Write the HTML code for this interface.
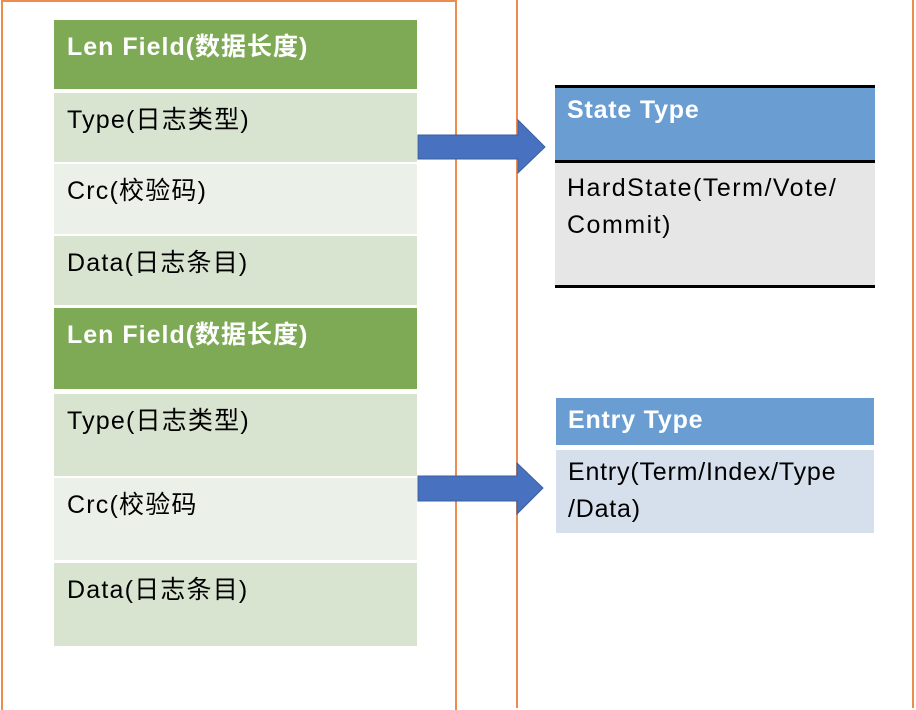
<!DOCTYPE html><html><head><meta charset="utf-8"><style>
body{margin:0;width:916px;height:704px;background:#fff;position:relative;overflow:hidden;font-family:"Liberation Sans","Noto Sans CJK SC",sans-serif}
.a{position:absolute}
.t{font-size:25px;letter-spacing:1.5px}
.c{position:absolute;left:54px;width:363px;box-sizing:border-box;padding:7px 0 0 13px;font-size:25px;letter-spacing:1.2px;color:#000}
.g{background:#7eaa55;color:#fff;font-weight:bold;letter-spacing:1px}
.l{background:#d8e3d0}.m{background:#ebf0e8}
</style></head><body>
<div class="a" style="left:1px;top:0;width:456px;height:710px;border:2px solid #ec8d4f;border-bottom:none;box-sizing:border-box"></div>
<div class="a" style="left:516px;top:-2px;width:398px;height:710px;border:2px solid #ec8d4f;border-top:none;border-bottom:none;box-sizing:border-box"></div>
<div class="c g" style="top:20px;height:69px">Len Field(数据长度)</div>
<div class="c l" style="top:93px;height:69px">Type(日志类型)</div>
<div class="c m" style="top:164px;height:70px">Crc(校验码)</div>
<div class="c l" style="top:236px;height:69px">Data(日志条目)</div>
<div class="c g" style="top:308px;height:81px">Len Field(数据长度)</div>
<div class="c l" style="top:394px;height:82px">Type(日志类型)</div>
<div class="c m" style="top:478px;height:82px">Crc(校验码</div>
<div class="c l" style="top:563px;height:83px">Data(日志条目)</div>
<svg class="a" style="left:0;top:0" width="916" height="704">
<polygon points="418,135 518,135 518,120 545,147 518,173 518,159 418,159" fill="#4872bf" stroke="#3a5f9e" stroke-width="1"/>
<polygon points="418,476 517,476 517,463 543,488 517,514 517,501 418,501" fill="#4872bf" stroke="#3a5f9e" stroke-width="1"/>
</svg>
<div class="a" style="left:555px;top:85px;width:320px;height:3px;background:#000"></div>
<div class="a" style="left:555px;top:88px;width:320px;height:72px;background:#6a9dd1;color:#fff;font-weight:bold;font-size:25px;letter-spacing:0.8px;box-sizing:border-box;padding:8px 12px">State Type</div>
<div class="a" style="left:555px;top:160px;width:320px;height:3px;background:#000"></div>
<div class="a t" style="left:555px;top:163px;width:320px;height:122px;background:#e6e6e6;line-height:37px;box-sizing:border-box;padding:7px 12px;white-space:nowrap">HardState(Term/Vote/<br>Commit)</div>
<div class="a" style="left:555px;top:285px;width:320px;height:3px;background:#000"></div>
<div class="a" style="left:556px;top:398px;width:318px;height:47px;background:#6a9dd1;color:#fff;font-weight:bold;font-size:25px;letter-spacing:0.8px;box-sizing:border-box;padding:8px 12px">Entry Type</div>
<div class="a t" style="left:556px;top:450px;width:318px;height:83px;background:#d6dfec;line-height:37px;box-sizing:border-box;padding:4px 12px;white-space:nowrap;letter-spacing:0.8px">Entry(Term/Index/Type<br>/Data)</div>
</body></html>
